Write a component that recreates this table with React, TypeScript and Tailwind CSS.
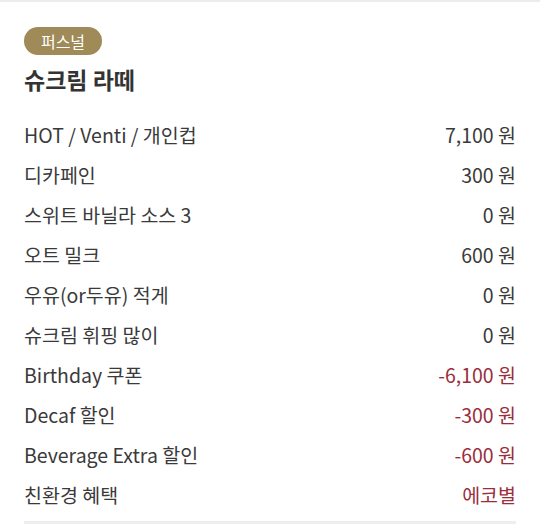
import React from "react";

const rows: { label: string; value: string; red?: boolean }[] = [
  { label: "HOT / Venti / 개인컵", value: "7,100 원" },
  { label: "디카페인", value: "300 원" },
  { label: "스위트 바닐라 소스 3", value: "0 원" },
  { label: "오트 밀크", value: "600 원" },
  { label: "우유(or두유) 적게", value: "0 원" },
  { label: "슈크림 휘핑 많이", value: "0 원" },
  { label: "Birthday 쿠폰", value: "-6,100 원", red: true },
  { label: "Decaf 할인", value: "-300 원", red: true },
  { label: "Beverage Extra 할인", value: "-600 원", red: true },
  { label: "친환경 혜택", value: "에코별", red: true },
];

export default function App() {
  return (
    <div
      className="w-[540px] h-[525px] overflow-hidden bg-white border-t-2 border-[#ececec]"
      style={{ fontFamily: '"Noto Sans CJK KR", "Noto Sans", sans-serif' }}
    >
      <div className="px-6 pt-[25px]">
        <div className="flex">
          <span className="h-[28px] w-[78px] rounded-full bg-[#a08a57] text-white text-[16px] flex items-center justify-center leading-none">
            퍼스널
          </span>
        </div>
        <div className="mt-[9px] h-[30px] flex items-center text-[23px] font-bold text-[#333333]">
          슈크림 라떼
        </div>
        <div className="mt-[21px]">
          {rows.map((r) => (
            <div
              key={r.label}
              className="h-[40px] flex items-center justify-between text-[19.5px] font-normal text-[#3a3a3a]"
            >
              <span>{r.label}</span>
              <span className={r.red ? "text-[#9a2e3c]" : ""}>{r.value}</span>
            </div>
          ))}
        </div>
        <div className="mt-[6px] h-[3px] bg-[#eeeeee]" />
      </div>
    </div>
  );
}
